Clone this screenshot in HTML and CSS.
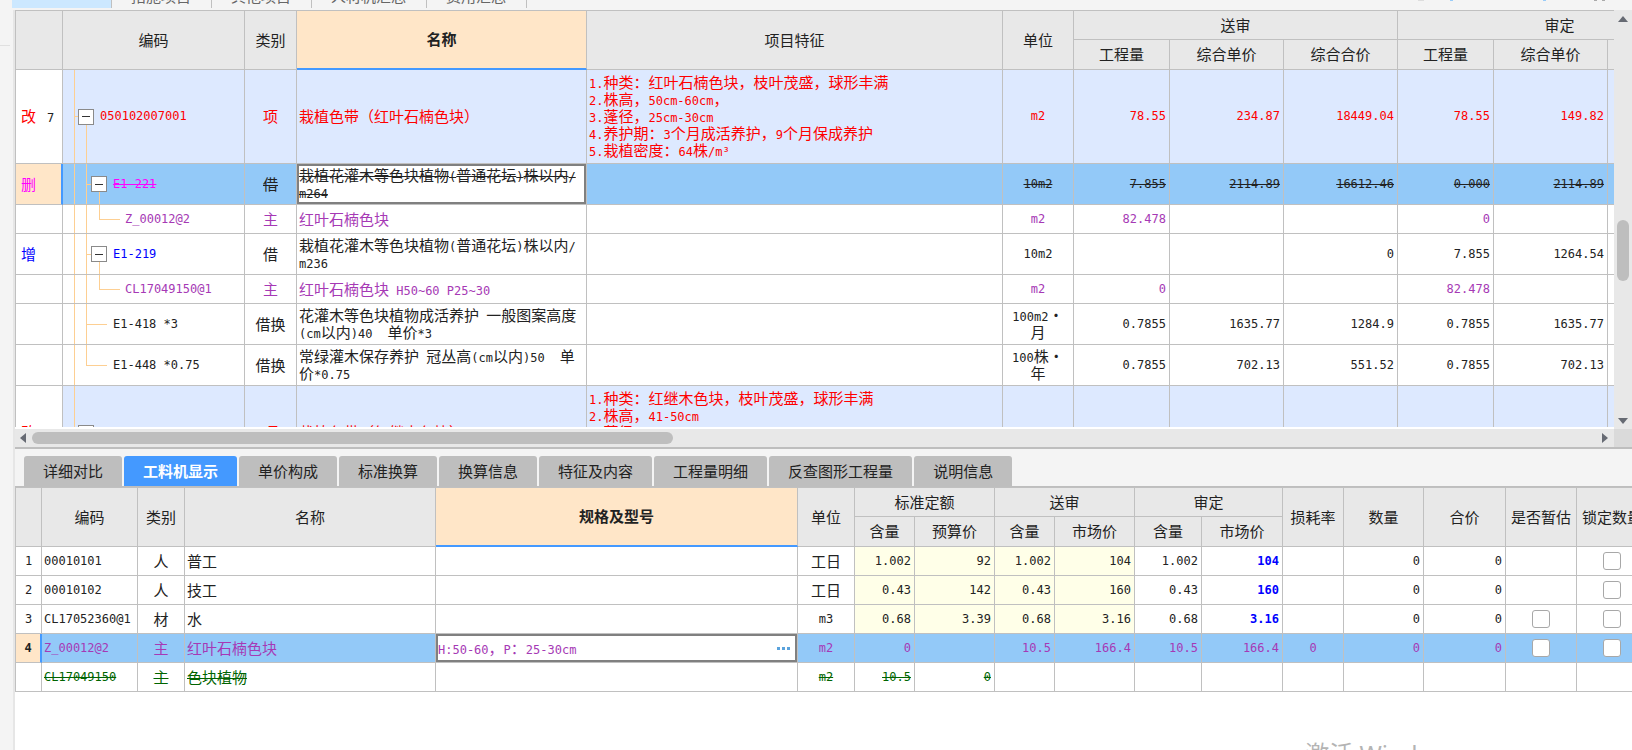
FILE: index.html
```html
<!DOCTYPE html>
<html lang="zh-CN">
<head>
<meta charset="utf-8">
<title>工程审核对比</title>
<link rel="stylesheet" href="styles.css">
</head>
<body>
<div class="app">
  <nav class="top-tabs" aria-label="页面">
    <button class="top-tab is-active">分部分项</button>
    <button class="top-tab">措施项目</button>
    <button class="top-tab">其他项目</button>
    <button class="top-tab">人材机汇总</button>
    <button class="top-tab">费用汇总</button>
    <span class="tools" aria-hidden="true"></span>
  </nav>
  <aside class="gutter"></aside>
  <main class="main">
    <section class="upper">
      <div class="upper-view">
        <table class="grid grid-bill">
          <colgroup>
            <col class="w-mark"><col class="w-tree"><col class="w-kind"><col class="w-name"><col><col class="w-unit">
            <col class="w-qty"><col class="w-price"><col class="w-price"><col class="w-qty"><col class="w-price"><col class="w-price">
          </colgroup>
          <thead>
            <tr class="h-top">
              <th rowspan="2"></th><th rowspan="2">编码</th><th rowspan="2">类别</th><th rowspan="2" class="picked">名称</th>
              <th rowspan="2">项目特征</th><th rowspan="2">单位</th><th colspan="3">送审</th><th colspan="3">审定</th>
            </tr>
            <tr class="h-sub"><th>工程量</th><th>综合单价</th><th>综合合价</th><th>工程量</th><th>综合单价</th><th>综合合价</th></tr>
          </thead>
          <tbody>
            <tr class="item red">
              <td class="mark"><span class="flag">改</span><span class="n no">7</span></td>
              <td class="tree t-item n"><div class="node"><button class="fold" aria-label="折叠"></button>050102007001</div></td>
              <td class="c">项</td><td>栽植色带（红叶石楠色块）</td>
              <td><span class="n">1.</span>种类：红叶石楠色块，枝叶茂盛，球形丰满<br><span class="n">2.</span>株高，<span class="n">50cm-60cm</span>，<br><span class="n">3.</span>蓬径，<span class="n">25cm-30cm</span><br><span class="n">4.</span>养护期：<span class="n">3</span>个月成活养护，<span class="n">9</span>个月保成养护<br><span class="n">5.</span>栽植密度：<span class="n">64</span>株<span class="n">/m³</span></td>
              <td class="c n">m2</td><td class="r">78.55</td><td class="r">234.87</td><td class="r">18449.04</td><td class="r">78.55</td><td class="r">149.82</td><td></td>
            </tr>
            <tr class="two selected gone">
              <td class="mark current magenta"><span class="flag">删</span></td>
              <td class="tree t-quota magenta n"><div class="node"><button class="fold" aria-label="折叠"></button><s>E1-221</s></div></td>
              <td class="c">借</td><td class="editing">栽植花灌木等色块植物<span class="n">(</span>普通花坛<span class="n">)</span>株以内<span class="n">/</span><br><span class="n">m264</span></td><td></td>
              <td class="c n">10m2</td><td class="r">7.855</td><td class="r">2114.89</td><td class="r">16612.46</td><td class="r">0.000</td><td class="r">2114.89</td><td></td>
            </tr>
            <tr class="one purple">
              <td></td><td class="tree t-leaf n"><div class="node">Z_00012@2</div></td>
              <td class="c">主</td><td>红叶石楠色块</td><td></td>
              <td class="c n">m2</td><td class="r">82.478</td><td></td><td></td><td class="r">0</td><td></td><td></td>
            </tr>
            <tr class="two">
              <td class="mark blue"><span class="flag">增</span></td>
              <td class="tree t-quota blue n"><div class="node"><button class="fold" aria-label="折叠"></button>E1-219</div></td>
              <td class="c">借</td><td>栽植花灌木等色块植物<span class="n">(</span>普通花坛<span class="n">)</span>株以内<span class="n">/</span><br><span class="n">m236</span></td><td></td>
              <td class="c n">10m2</td><td></td><td></td><td class="r">0</td><td class="r">7.855</td><td class="r">1264.54</td><td></td>
            </tr>
            <tr class="one purple">
              <td></td><td class="tree t-leaf n"><div class="node">CL17049150@1</div></td>
              <td class="c">主</td><td>红叶石楠色块<span class="n"> H50~60 P25~30</span></td><td></td>
              <td class="c n">m2</td><td class="r">0</td><td></td><td></td><td class="r">82.478</td><td></td><td></td>
            </tr>
            <tr class="two">
              <td></td><td class="tree t-plain n"><div class="node">E1-418 *3</div></td>
              <td class="c">借换</td><td>花灌木等色块植物成活养护<span class="n"> </span>一般图案高度<br><span class="n">(cm</span>以内<span class="n">)40</span>　单价<span class="n">*3</span></td><td></td>
              <td class="c"><span class="n">100m2</span>・<br>月</td><td class="r">0.7855</td><td class="r">1635.77</td><td class="r">1284.9</td><td class="r">0.7855</td><td class="r">1635.77</td><td></td>
            </tr>
            <tr class="two">
              <td></td><td class="tree t-last n"><div class="node">E1-448 *0.75</div></td>
              <td class="c">借换</td><td>常绿灌木保存养护<span class="n"> </span>冠丛高<span class="n">(cm</span>以内<span class="n">)50</span>　单<br>价<span class="n">*0.75</span></td><td></td>
              <td class="c"><span class="n">100</span>株・<br>年</td><td class="r">0.7855</td><td class="r">702.13</td><td class="r">551.52</td><td class="r">0.7855</td><td class="r">702.13</td><td></td>
            </tr>
            <tr class="item red">
              <td class="mark"><span class="flag">改</span><span class="n no">8</span></td>
              <td class="tree t-item n"><div class="node"><button class="fold" aria-label="折叠"></button>050102007002</div></td>
              <td class="c">项</td><td>栽植色带（红继木色块）</td>
              <td><span class="n">1.</span>种类：红继木色块，枝叶茂盛，球形丰满<br><span class="n">2.</span>株高，<span class="n">41-50cm</span><br><span class="n">3.</span>蓬径，<span class="n">25cm-30cm</span><br><span class="n">4.</span>养护期：<span class="n">3</span>个月成活养护，<span class="n">9</span>个月保成养护<br><span class="n">5.</span>栽植密度：<span class="n">64</span>株<span class="n">/m³</span></td>
              <td class="c n">m2</td><td class="r">33.51</td><td class="r">243.71</td><td class="r">8151.33</td><td class="r">33.51</td><td class="r">153.67</td><td></td>
            </tr>
          </tbody>
        </table>
      </div>
      <div class="vbar"><span class="arrow up"></span><span class="vthumb"></span><span class="arrow down"></span></div>
      <div class="hbar"><span class="arrow left"></span><span class="htrack"><span class="hthumb"></span></span><span class="arrow right"></span></div>
      <div class="corner"></div>
    </section>

    <section class="lower">
      <nav class="tabs" aria-label="明细">
        <button class="tab">详细对比</button>
        <button class="tab is-active">工料机显示</button>
        <button class="tab">单价构成</button>
        <button class="tab">标准换算</button>
        <button class="tab">换算信息</button>
        <button class="tab">特征及内容</button>
        <button class="tab">工程量明细</button>
        <button class="tab">反查图形工程量</button>
        <button class="tab">说明信息</button>
      </nav>
      <table class="grid grid-res">
        <colgroup>
          <col class="w-no"><col class="w-code"><col class="w-type"><col class="w-res"><col><col class="w-u">
          <col class="w-60"><col class="w-80"><col class="w-60"><col class="w-80"><col class="w-66"><col class="w-81">
          <col class="w-61"><col class="w-80"><col class="w-82"><col class="w-71"><col class="w-71">
        </colgroup>
        <thead>
          <tr class="h-top">
            <th rowspan="2"></th><th rowspan="2">编码</th><th rowspan="2">类别</th><th rowspan="2">名称</th><th rowspan="2" class="picked">规格及型号</th><th rowspan="2">单位</th>
            <th colspan="2">标准定额</th><th colspan="2">送审</th><th colspan="2">审定</th>
            <th rowspan="2">损耗率</th><th rowspan="2">数量</th><th rowspan="2">合价</th><th rowspan="2">是否暂估</th><th rowspan="2">锁定数量</th>
          </tr>
          <tr class="h-sub"><th>含量</th><th>预算价</th><th>含量</th><th>市场价</th><th>含量</th><th>市场价</th></tr>
        </thead>
        <tbody>
          <tr class="one">
            <td class="c n">1</td><td class="n">00010101</td><td class="c">人</td><td>普工</td><td></td><td class="c">工日</td>
            <td class="r pale">1.002</td><td class="r pale">92</td><td class="r pale">1.002</td><td class="r pale">104</td><td class="r">1.002</td><td class="r strong">104</td>
            <td></td><td class="r">0</td><td class="r">0</td><td></td><td class="c"><input type="checkbox" aria-label="锁定数量"></td>
          </tr>
          <tr class="one">
            <td class="c n">2</td><td class="n">00010102</td><td class="c">人</td><td>技工</td><td></td><td class="c">工日</td>
            <td class="r pale">0.43</td><td class="r pale">142</td><td class="r pale">0.43</td><td class="r pale">160</td><td class="r">0.43</td><td class="r strong">160</td>
            <td></td><td class="r">0</td><td class="r">0</td><td></td><td class="c"><input type="checkbox" aria-label="锁定数量"></td>
          </tr>
          <tr class="one">
            <td class="c n">3</td><td class="n">CL17052360@1</td><td class="c">材</td><td>水</td><td></td><td class="c n">m3</td>
            <td class="r pale">0.68</td><td class="r pale">3.39</td><td class="r pale">0.68</td><td class="r pale">3.16</td><td class="r">0.68</td><td class="r strong">3.16</td>
            <td></td><td class="r">0</td><td class="r">0</td><td class="c"><input type="checkbox" aria-label="是否暂估"></td><td class="c"><input type="checkbox" aria-label="锁定数量"></td>
          </tr>
          <tr class="one selected purple">
            <td class="c n current"><b>4</b></td><td class="n">Z_00012@2</td><td class="c">主</td><td>红叶石楠色块</td>
            <td class="editing"><div class="edit-line"><span><span class="n">H:50-60</span>，<span class="n">P</span>：<span class="n">25-30cm</span></span><button class="more" aria-label="更多"><i></i><i></i><i></i></button></div></td><td class="c n">m2</td>
            <td class="r">0</td><td></td><td class="r">10.5</td><td class="r">166.4</td><td class="r">10.5</td><td class="r">166.4</td>
            <td class="c n">0</td><td class="r">0</td><td class="r">0</td><td class="c"><input type="checkbox" aria-label="是否暂估"></td><td class="c"><input type="checkbox" aria-label="锁定数量"></td>
          </tr>
          <tr class="one gone green">
            <td></td><td class="n">CL17049150</td><td class="c">主</td><td>色块植物</td><td></td><td class="c n">m2</td>
            <td class="r">10.5</td><td class="r">0</td><td></td><td></td><td></td><td></td><td></td><td></td><td></td><td></td><td></td>
          </tr>
        </tbody>
      </table>
      <div class="watermark">激活 Windows</div>
    </section>
  </main>
</div>
</body>
</html>
```
FILE: styles.css
```css
:root {
  --line: #c0c0c0;
  --bg: #f4f4f4;
  --head: #e8e8e8;
  --accent: #4499ff;
  --pick: #ffe6c8;
  --guide: #fdcf92;
  --gray: #bebebe;
}

* { box-sizing: border-box; }

body {
  margin: 0;
  background: var(--bg);
  color: #222;
  font: 15px/17px "Liberation Sans", "Noto Sans CJK SC", sans-serif;
}

button {
  margin: 0;
  padding: 0;
  border: 0;
  font: inherit;
  color: inherit;
}

.app {
  display: grid;
  grid-template: 10px minmax(0, 1fr) / 15px minmax(0, 1fr);
  height: 100vh;
  overflow: hidden;
}

/* window tabs, scrolled mostly out of view */
.top-tabs {
  grid-column: 1 / 3;
  display: flex;
  align-items: flex-end;
  padding: 0 0 2px 12px;
  overflow: hidden;
}
.top-tab {
  padding: 4px 20px 3px 19px;
  border-right: 1px solid var(--line);
  background: var(--bg);
  color: #666;
  white-space: nowrap;
}
.top-tab.is-active {
  padding-bottom: 8px;
  background: #cce8ff;
}
.tools {
  align-self: flex-start;
  width: 187px;
  height: 1px;
  margin: 0 27px 0 auto;
  background:
    linear-gradient(#ddd, #ddd) 0 0 / 6px 1px no-repeat,
    linear-gradient(#9accf8, #9accf8) 32px 0 / 3px 1px no-repeat,
    linear-gradient(#9accf8, #9accf8) 125px 0 / 3px 1px no-repeat,
    linear-gradient(#aaa, #aaa) 176px 0 / 3px 1px no-repeat,
    linear-gradient(#aaa, #aaa) 184px 0 / 3px 1px no-repeat;
}

.gutter {
  border-right: 2px solid #e6e6e6;
  background: linear-gradient(#e0e0e0, #e0e0e0) 0 35px / 10px 1px no-repeat;
}

.main {
  display: grid;
  grid-template-rows: minmax(0, 439fr) minmax(0, 301fr);
}

/* upper pane */
.upper {
  display: grid;
  grid-template: minmax(0, 1fr) 18px / minmax(0, 1fr) 18px;
  border-bottom: 2px solid var(--gray);
  background: var(--head);
}
.upper-view {
  border-bottom: 2px solid #fff;
  overflow: hidden;
}

.grid {
  border-collapse: separate;
  border-spacing: 0;
  table-layout: fixed;
  background: #fff;
  border-left: 1px solid var(--line);
  border-top: 1px solid var(--line);
}
.grid-bill { width: calc(100% + 108px); }
.grid-res { width: calc(100% + 16px); }

.grid th,
.grid td {
  padding: 0 3px 0 2px;
  border-right: 1px solid var(--line);
  border-bottom: 1px solid var(--line);
  overflow: hidden;
  white-space: nowrap;
  text-align: left;
  vertical-align: middle;
}
.grid th {
  padding: 0;
  background: var(--head);
  font-weight: normal;
  text-align: center;
}
.grid th.picked {
  background: var(--pick);
  border-bottom: 2px solid var(--accent);
  font-weight: bold;
}
.grid .c { padding: 0; text-align: center; }
.grid .r { text-align: right; }

/* codes, units and figures */
.n,
.r {
  font-family: "DejaVu Sans Mono", "Noto Sans CJK SC", monospace;
  font-size: 12px;
}
span.n {
  line-height: 12px;
  white-space: pre;
}

.w-mark { width: 47px; }
.w-tree { width: 182px; }
.w-kind { width: 52px; }
.w-name { width: 290px; }
.w-unit { width: 71px; }
.w-qty { width: 96px; }
.w-price { width: 114px; }
.w-no { width: 26px; }
.w-code { width: 96px; }
.w-type { width: 47px; }
.w-res { width: 251px; }
.w-u { width: 57px; }
.w-60 { width: 60px; }
.w-61 { width: 61px; }
.w-66 { width: 67px; }
.w-71 { width: 71px; }
.w-80 { width: 80px; }
.w-81 { width: 81px; }
.w-82 { width: 82px; }

.h-top { height: 29px; }
.h-sub { height: 30px; }
.item { height: 94px; background: #dde9ff; }
.two { height: 41px; }
.one { height: 29px; }

.red { color: #f00; }
.purple { color: #a639b5; }
.magenta { color: #f0f; }
.blue { color: #00f; }
.green { color: #006400; }
.strong { color: #00f; font-weight: bold; }
.pale { background: #ffffe8; }
.selected { background: #93c9f8; }
.gone td:not(.mark):not(.tree) { text-decoration: line-through; }
.gone span.n {
  display: inline-block;
  text-decoration: line-through;
}

.grid td.mark { padding: 0 0 0 5px; }
.item .mark { background: #fff; }
.flag { display: inline-block; width: 26px; }
.no { color: #222; }
.grid td.current {
  background: var(--pick);
  border-right: 2px solid var(--accent);
}
.current b { color: #222; }
.grid td.editing {
  background: #fff;
  box-shadow: inset 0 0 0 2px #808080;
}

/* tree guides */
.grid td.tree {
  padding: 0;
  --g: linear-gradient(var(--guide), var(--guide));
  background-repeat: no-repeat;
}
.t-item {
  background-image: var(--g), var(--g), var(--g);
  background-position: 11px 0, 11px 50%, 23px 100%;
  background-size: 1px 100%, 6px 1px, 1px 50%;
}
.t-quota {
  background-image: var(--g), var(--g), var(--g), var(--g);
  background-position: 11px 0, 23px 0, 23px 50%, 36px 100%;
  background-size: 1px 100%, 1px 100%, 6px 1px, 1px 50%;
}
.t-leaf {
  background-image: var(--g), var(--g), var(--g), var(--g);
  background-position: 11px 0, 23px 0, 36px 0, 36px 50%;
  background-size: 1px 100%, 1px 100%, 1px 50%, 21px 1px;
}
.t-plain {
  background-image: var(--g), var(--g), var(--g);
  background-position: 11px 0, 23px 0, 23px 50%;
  background-size: 1px 100%, 1px 100%, 21px 1px;
}
.t-last {
  background-image: var(--g), var(--g), var(--g);
  background-position: 11px 0, 23px 0, 23px 50%;
  background-size: 1px 100%, 1px 50%, 21px 1px;
}
.node {
  display: flex;
  align-items: center;
  gap: 6px;
}
.t-item .node { padding-left: 15px; }
.t-quota .node { padding-left: 28px; }
.t-leaf .node { padding-left: 62px; }
.t-plain .node,
.t-last .node { padding-left: 50px; }
.fold {
  width: 16px;
  height: 16px;
  border: 1px solid #8a8a8a;
  background: linear-gradient(#333, #333) center / 8px 1px no-repeat #fff;
}

/* scroll bars */
.vbar {
  display: flex;
  flex-direction: column;
  align-items: center;
  justify-content: space-between;
  padding: 6px 0 5px;
}
.vthumb {
  width: 12px;
  height: 61px;
  margin-top: 60px;
  border-radius: 6px;
  background: var(--gray);
}
.hbar {
  display: flex;
  align-items: center;
  gap: 6px;
  padding: 0 6px 0 5px;
}
.htrack { flex: 1; }
.hthumb {
  display: block;
  width: 41%;
  height: 12px;
  border-radius: 6px;
  background: var(--gray);
}
.corner { background: #dadada; }
.arrow { border: 5px solid transparent; }
.up { border-top-width: 0; border-bottom: 6px solid #666a73; }
.down { border-bottom-width: 0; border-top: 6px solid #666a73; }
.left { border-left-width: 0; border-right: 6px solid #666a73; }
.right { border-right-width: 0; border-left: 6px solid #666a73; }

/* lower pane */
.lower {
  position: relative;
  overflow: hidden;
  background: #fff;
}
.tabs {
  display: flex;
  gap: 2px;
  padding: 7px 9px 0;
  border-bottom: 1px solid var(--gray);
  background: var(--bg);
}
.tab {
  height: 30px;
  padding: 1px 19px 0;
  border-radius: 3px 3px 0 0;
  background: var(--gray);
  white-space: nowrap;
}
.tab.is-active {
  background: var(--accent);
  color: #fff;
  font-weight: bold;
}

.edit-line {
  display: flex;
  justify-content: space-between;
  align-items: center;
}
.more {
  display: flex;
  gap: 2px;
  padding: 4px;
  background: none;
}
.more i {
  width: 3px;
  height: 3px;
  background: #5ba3dc;
}

input[type="checkbox"] {
  appearance: none;
  display: block;
  width: 18px;
  height: 18px;
  margin: 0 auto;
  border: 1px solid #a8a8a8;
  border-radius: 3px;
  background: #fff;
}

.watermark {
  position: absolute;
  right: 170px;
  bottom: -16px;
  color: #b4b4b4;
  font: 24px/24px "Noto Sans", "Noto Sans CJK SC", sans-serif;
}
```
